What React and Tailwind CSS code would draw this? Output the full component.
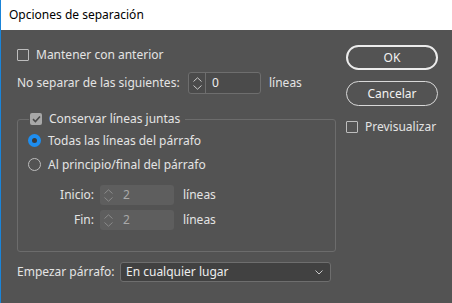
import React from 'react';

const Check = ({ checked }) =>
  checked ? (
    <span className="flex h-[12px] w-[12px] items-center justify-center rounded-[2px] bg-[#a8a8a8]">
      <svg width="9" height="8" viewBox="0 0 9 8">
        <path d="M1 4.2 L3.4 6.5 L8 1.5" fill="none" stroke="#4a4a4a" strokeWidth="1.6" />
      </svg>
    </span>
  ) : (
    <span className="h-[12px] w-[12px] rounded-[1px] border border-[#bdbdbd]" />
  );

const Radio = ({ on }) =>
  on ? (
    <span className="flex h-[13px] w-[13px] items-center justify-center rounded-full bg-[#1e8ef0]">
      <span className="h-[5px] w-[5px] rounded-full bg-[#3a3a3a]" />
    </span>
  ) : (
    <span className="h-[13px] w-[13px] rounded-full border border-[#bdbdbd]" />
  );

const Spinner = ({ value, disabled, w = 'w-[73px]', h = 'h-[22px]' }) => (
  <div
    className={`flex ${w} ${h} items-center rounded-[3px] ${
      disabled ? 'bg-[#5e5e5e]' : 'border border-[#6e6e6e] bg-[#4b4b4b]'
    }`}
  >
    <div
      className={`flex h-full w-[17px] flex-col items-center justify-center gap-[3px] ${
        disabled ? '' : 'border-r border-[#6e6e6e]'
      }`}
    >
      <svg width="9" height="5" viewBox="0 0 9 5">
        <path d="M0.5 4.5 L4.5 0.8 L8.5 4.5" fill="none" stroke={disabled ? '#8a8a8a' : '#c8c8c8'} strokeWidth="1" />
      </svg>
      <svg width="9" height="5" viewBox="0 0 9 5">
        <path d="M0.5 0.5 L4.5 4.2 L8.5 0.5" fill="none" stroke={disabled ? '#8a8a8a' : '#c8c8c8'} strokeWidth="1" />
      </svg>
    </div>
    <span className={`pl-[6px] ${disabled ? 'text-[#a9a9a9]' : 'text-[#eeeeee]'}`}>{value}</span>
  </div>
);

export default function App() {
  return (
    <div
      className="flex h-[303px] w-[452px] flex-col overflow-hidden border-l border-[#1a84d8] text-[12px] leading-none text-[#e4e4e4]"
      style={{ fontFamily: '"Noto Sans", "Liberation Sans", sans-serif' }}
    >
      <div className="flex h-[30px] items-center bg-white pl-[8px] text-[12px] text-black">
        Opciones de separación
      </div>
      <div className="flex flex-1 bg-[#535353]">
        <div className="flex w-[335px] flex-col pl-[16px] pt-[19px]">
          <div className="flex h-[12px] items-center gap-[7px]">
            <Check />
            <span>Mantener con anterior</span>
          </div>
          <div className="mt-[11px] flex items-center">
            <span className="w-[171px]">No separar de las siguientes:</span>
            <Spinner value="0" />
            <span className="ml-[8px]">líneas</span>
          </div>
          <fieldset className="mt-[19px] h-[139px] w-[319px] rounded-[3px] border border-[#6c6c6c] pl-[10px]">
            <legend className="ml-[1px] flex items-center gap-[7px] px-[1px] pr-[5px]">
              <Check checked />
              <span>Conservar líneas juntas</span>
            </legend>
            <div className="mt-[9px] flex items-center gap-[7px]">
              <Radio on />
              <span>Todas las líneas del párrafo</span>
            </div>
            <div className="mt-[11px] flex items-center gap-[7px]">
              <Radio />
              <span>Al principio/final del párrafo</span>
            </div>
            <div className="mt-[14px] flex items-center">
              <span className="mr-[6px] w-[66px] text-right">Inicio:</span>
              <Spinner value="2" disabled w="w-[74px]" h="h-[20px]" />
              <span className="ml-[9px]">líneas</span>
            </div>
            <div className="mt-[5px] flex items-center">
              <span className="mr-[6px] w-[66px] text-right">Fin:</span>
              <Spinner value="2" disabled w="w-[74px]" h="h-[20px]" />
              <span className="ml-[9px]">líneas</span>
            </div>
          </fieldset>
          <div className="mt-[10px] flex items-center">
            <span className="w-[103px]">Empezar párrafo:</span>
            <div className="flex h-[20px] w-[211px] items-center justify-between rounded-[3px] border border-[#6e6e6e] bg-[#414141] pl-[5px] pr-[7px]">
              <span className="text-[#eeeeee]">En cualquier lugar</span>
              <svg width="8" height="5" viewBox="0 0 8 5">
                <path d="M0.5 0.5 L4 4 L7.5 0.5" fill="none" stroke="#c8c8c8" strokeWidth="1" />
              </svg>
            </div>
          </div>
        </div>
        <div className="flex flex-col pl-[10px] pt-[15px]">
          <button className="flex h-[25px] w-[92px] items-center justify-center rounded-full border-2 border-[#ececec] text-[#f2f2f2]">
            OK
          </button>
          <button className="mt-[11px] flex h-[25px] w-[92px] items-center justify-center rounded-full border border-[#d8d8d8] text-[#f2f2f2]">
            Cancelar
          </button>
          <div className="mt-[15px] flex items-center gap-[7px]">
            <Check />
            <span>Previsualizar</span>
          </div>
        </div>
      </div>
    </div>
  );
}
